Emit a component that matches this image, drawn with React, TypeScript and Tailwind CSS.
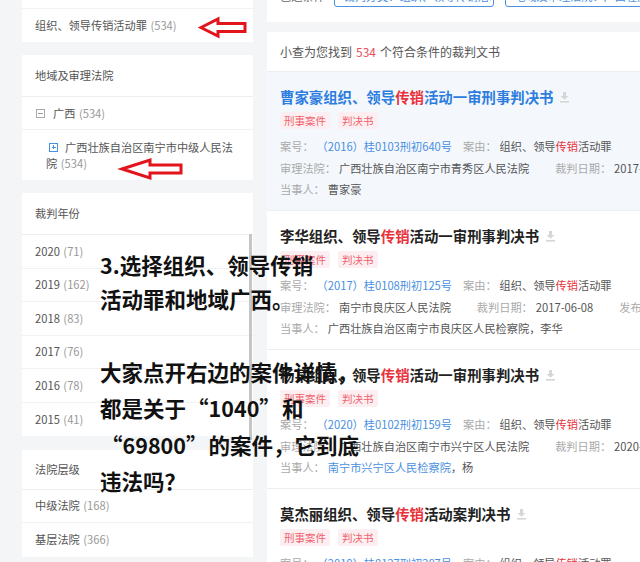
import React from "react";

type Part = { t: string; c?: string };

function Download() {
  return (
    <svg width="11" height="12" viewBox="0 0 11 12" className="ml-[6px] shrink-0">
      <path d="M4 1h3v4h2.5L5.5 8.8 1.5 5H4z" fill="#d6d6d6" />
      <rect x="1" y="10" width="9" height="1.6" fill="#d6d6d6" />
    </svg>
  );
}

function Title({ name, rest, blue }: { name: string; rest: string; blue?: boolean }) {
  return (
    <div className="flex items-center h-[22px] whitespace-nowrap">
      <span className={`text-[14.4px] font-bold ${blue ? "text-[#2d7ddf]" : "text-[#222]"}`}>
        {name}组织、领导<span className="text-[#e8323c]">传销</span>
        {rest}
      </span>
      <Download />
    </div>
  );
}

function Tags() {
  return (
    <div className="flex items-center gap-[8px] h-[16px] mt-[4px]">
      <span className="px-[4px] h-[17px] leading-[17px] bg-[#fdeff1] text-[#f0606d] text-[10.5px] rounded-[2px]">刑事案件</span>
      <span className="px-[4px] h-[17px] leading-[17px] bg-[#fdeff1] text-[#f0606d] text-[10.5px] rounded-[2px]">判决书</span>
    </div>
  );
}

function Item({ label, parts }: { label: string; parts: Part[] }) {
  return (
    <span className="flex items-center">
      <span className="text-[#aaaaaa]">{label}</span>
      <span className="ml-[3px]">
        {parts.map((p, i) => (
          <span key={i} className={p.c ?? "text-[#555]"}>
            {p.t}
          </span>
        ))}
      </span>
    </span>
  );
}

const BLUE = "text-[#4a8fe0]";
const RED = "text-[#e8323c]";

const cause: Part[] = [{ t: "组织、领导" }, { t: "传销", c: RED }, { t: "活动罪" }];

type Card = {
  name: string;
  rest: string;
  blue?: boolean;
  bg?: boolean;
  caseNo: string;
  court: string;
  date: string;
  extra?: boolean;
  party: Part[];
};

const cards: Card[] = [
  {
    name: "曹家豪",
    rest: "活动一审刑事判决书",
    blue: true,
    bg: true,
    caseNo: "（2016）桂0103刑初640号",
    court: "广西壮族自治区南宁市青秀区人民法院",
    date: "2017-03-15",
    party: [{ t: "曹家豪" }],
  },
  {
    name: "李华",
    rest: "活动一审刑事判决书",
    caseNo: "（2017）桂0108刑初125号",
    court: "南宁市良庆区人民法院",
    date: "2017-06-08",
    extra: true,
    party: [{ t: "广西壮族自治区南宁市良庆区人民检察院，李华" }],
  },
  {
    name: "杨某",
    rest: "活动一审刑事判决书",
    caseNo: "（2020）桂0102刑初159号",
    court: "广西壮族自治区南宁市兴宁区人民法院",
    date: "2020-05-20",
    party: [{ t: "南宁市兴宁区人民检察院", c: BLUE }, { t: "，杨" }],
  },
  {
    name: "莫杰丽",
    rest: "活动案判决书",
    caseNo: "（2019）桂0127刑初287号",
    court: "广西壮族自治区南宁市横县人民法院",
    date: "2019-11-12",
    party: [{ t: "莫杰丽" }],
  },
];

function CardView({ c }: { c: Card }) {
  return (
    <div className={`px-[13px] pt-[14px] pb-[9.5px] border-b border-[#eeeeee] ${c.bg ? "bg-[#f4f8fd]" : "bg-white"}`}>
      <Title name={c.name} rest={c.rest} blue={c.blue} />
      <Tags />
      <div className="mt-[8px] text-[11.2px] whitespace-nowrap">
        <div className="flex items-center h-[21.5px] gap-[11px]">
          <Item label="案号：" parts={[{ t: c.caseNo, c: BLUE }]} />
          <Item label="案由：" parts={cause} />
        </div>
        <div className="flex items-center h-[21.5px] gap-[26px]">
          <Item label="审理法院：" parts={[{ t: c.court }]} />
          <Item label="裁判日期：" parts={[{ t: c.date }]} />
          {c.extra && <Item label="发布日期：" parts={[{ t: "2017-07-02" }]} />}
        </div>
        <div className="flex items-center h-[21.5px]">
          <Item label="当事人：" parts={c.party} />
        </div>
      </div>
    </div>
  );
}

function Count({ n }: { n: number }) {
  return <span className="text-[#999] ml-[3.5px]">({n})</span>;
}

function Row({ children }: { children: React.ReactNode }) {
  return (
    <div className="h-[33.5px] px-[13px] flex items-center border-b border-[#f2f2f2] last:border-b-0 whitespace-nowrap text-[#555]">
      {children}
    </div>
  );
}

function Header({ text, h }: { text: string; h: string }) {
  return (
    <div className={`${h} px-[13px] flex items-center border-b border-[#eeeeee] text-[#555]`}>{text}</div>
  );
}

function LeftColumn() {
  return (
    <div className="w-[231px] shrink-0 flex flex-col mt-[-24px] text-[11.2px]">
      <div className="bg-white">
        <div className="h-[33px] px-[13px] flex items-center border-b border-[#f2f2f2] text-[#555]">
          非法经营罪<Count n={12} />
        </div>
        <div className="h-[33px] px-[13px] flex items-center text-[#555]">
          组织、领导传销活动罪<Count n={534} />
        </div>
      </div>

      <div className="bg-white mt-[13px]">
        <Header text="地域及审理法院" h="h-[42px]" />
        <div className="h-[33px] px-[14px] flex items-center border-b border-[#f2f2f2] text-[#555]">
          <span className="w-[9px] h-[9px] border border-[#aaa] flex items-center justify-center mr-[8px]">
            <span className="w-[5px] h-[1px] bg-[#999]" />
          </span>
          广西<Count n={534} />
        </div>
        <div className="py-[9px] pl-[24px] leading-[16px] text-[#555] whitespace-nowrap">
          <div className="flex items-center">
            <span className="ml-[3px] w-[9px] h-[9px] border border-[#4a8fe0] relative mr-[7px]">
              <span className="absolute left-[1.5px] top-[3px] w-[4px] h-[1px] bg-[#4a8fe0]" />
              <span className="absolute left-[3px] top-[1.5px] w-[1px] h-[4px] bg-[#4a8fe0]" />
            </span>
            广西壮族自治区南宁市中级人民法
          </div>
          <div>
            院<Count n={534} />
          </div>
        </div>
      </div>

      <div className="bg-white mt-[13px]">
        <Header text="裁判年份" h="h-[42px]" />
        <Row>2020<Count n={71} /></Row>
        <Row>2019<Count n={162} /></Row>
        <Row>2018<Count n={83} /></Row>
        <Row>2017<Count n={76} /></Row>
        <Row>2016<Count n={78} /></Row>
        <Row>2015<Count n={41} /></Row>
      </div>

      <div className="bg-white mt-[13.5px]">
        <Header text="法院层级" h="h-[40px]" />
        <Row>中级法院<Count n={168} /></Row>
        <Row>基层法院<Count n={366} /></Row>
      </div>
    </div>
  );
}

function RightColumn() {
  return (
    <div className="ml-[14px] w-[440px] shrink-0 mt-[-20px] text-[11.2px]">
      <div className="bg-white h-[42px] px-[13px] pt-[5px] flex items-start whitespace-nowrap">
        <span className="h-[22px] leading-[22px] text-[#666] w-[58px]">已选条件</span>
        <span className="h-[22px] w-[169px] leading-[20px] border border-[#4a8fe0] rounded-[3px] px-[8px] text-[#4a8fe0] overflow-hidden">
          裁判分类：组织、领导传销活动罪 ×
        </span>
        <span className="ml-[11px] h-[22px] w-[200px] leading-[20px] border border-[#4a8fe0] rounded-[3px] px-[8px] text-[#4a8fe0] overflow-hidden">
          地域及审理法院：广西壮族自治区南宁市
        </span>
      </div>

      <div className="bg-white mt-[10px]">
        <div className="h-[40px] px-[13px] flex items-center border-b border-[#eeeeee] text-[12px] text-[#555] whitespace-nowrap">
          小查为您找到<span className="text-[#e8505b] mx-[4px]">534</span>个符合条件的裁判文书
        </div>
        {cards.map((c, i) => (
          <CardView key={i} c={c} />
        ))}
      </div>
    </div>
  );
}

function LQ() {
  return <span className="inline-block w-[1.05em] text-right">“</span>;
}
function RQ() {
  return <span className="inline-block w-[1.05em] text-left">”</span>;
}

export default function App() {
  return (
    <div
      lang="zh-CN"
      className="relative w-[640px] h-[562px] overflow-hidden bg-[#f4f5f7] font-['Noto_Sans_CJK_SC',sans-serif]"
    >
      <div className="flex items-start pl-[22px]">
        <LeftColumn />
        <RightColumn />
      </div>

      <div className="absolute left-[249px] top-[234px] w-[3px] h-[206px] bg-[#c6c6c6]" />

      <svg className="absolute left-0 top-0" width="640" height="562" viewBox="0 0 640 562">
        <polygon
          points="201,27.5 218,19 218,23.5 245,23.5 245,31.5 218,31.5 218,36"
          fill="#fff"
          stroke="#e2141c"
          strokeWidth="3"
          strokeLinejoin="miter"
        />
        <polygon
          points="122,169 150,160 150,165 181,165 181,173 150,173 150,178"
          fill="#fff"
          stroke="#e2141c"
          strokeWidth="3"
          strokeLinejoin="miter"
        />
      </svg>

      <div className="absolute left-[100px] top-[248px] text-[21.5px] font-bold text-[#111] whitespace-nowrap">
        <div className="leading-[34px]">
          <div>3.选择组织、领导传销</div>
          <div>活动罪和地域广西。</div>
        </div>
        <div className="leading-[36.3px] mt-[38px]">
          <div>大家点开右边的案件详情，</div>
          <div>
            都是关于<LQ />1040<RQ />和
          </div>
          <div>
            <LQ />69800<RQ />的案件，它到底
          </div>
          <div>违法吗？</div>
        </div>
      </div>
    </div>
  );
}
